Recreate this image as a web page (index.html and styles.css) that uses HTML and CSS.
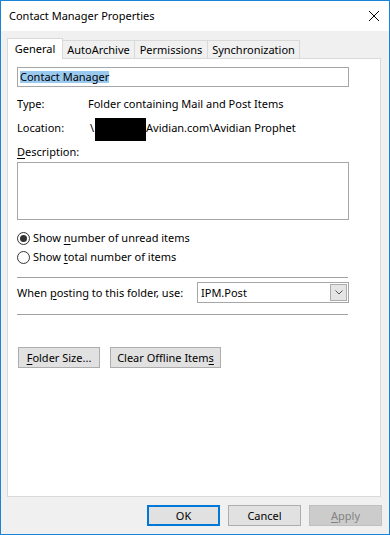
FILE: index.html
```html
<!DOCTYPE html>
<html>
<head>
<meta charset="utf-8">
<link rel="stylesheet" href="styles.css">
</head>
<body>
<div class="window">
  <div class="titlebar">
    <span class="title">Contact Manager Properties</span>
    <svg class="close" width="10" height="10" viewBox="0 0 10 10"><path d="M0 0L10 10M10 0L0 10" stroke="#000" stroke-width="1" fill="none"/></svg>
  </div>
  <div class="client">
    <div class="tabs">
      <div class="tab sel">General</div>
      <div class="tab t-aa">AutoArchive</div>
      <div class="tab t-pe">Permissions</div>
      <div class="tab t-sy">Synchronization</div>
    </div>
    <div class="panel">
      <div class="namebox"><span class="seltext">Contact Manager</span></div>
      <div class="info-row"><span class="lbl">Type:</span><span class="val">Folder containing Mail and Post Items</span></div>
      <div class="info-row loc"><span class="lbl">Location:</span><span class="val loc-val"><span class="txt">\</span><span class="redact"></span><span class="txt">Avidian.com\Avidian Prophet</span></span></div>
      <div class="desc"><u>D</u>escription:</div>
      <div class="textarea"></div>
      <div class="radio-row first"><span class="radio on"></span><span>Show <u>n</u>umber of unread items</span></div>
      <div class="radio-row"><span class="radio"></span><span>Show <u>t</u>otal number of items</span></div>
      <div class="sep"></div>
      <div class="post-row">
        <span class="post-lbl">When <u>p</u>osting to this folder, use:</span>
        <div class="combo">
          <span class="combo-text">IPM.Post</span>
          <span class="drop"><svg width="8" height="5" viewBox="0 0 8 5"><path d="M0.5 0.5L4 4L7.5 0.5" stroke="#555" stroke-width="1" fill="none"/></svg></span>
        </div>
      </div>
      <div class="sep sep2"></div>
      <div class="btn-row">
        <div class="btn w-folder"><span><u>F</u>older Size...</span></div>
        <div class="btn w-clear"><span>Clear Offline Item<u>s</u></span></div>
      </div>
    </div>
    <div class="footer">
      <div class="btn fbtn default">OK</div>
      <div class="btn fbtn">Cancel</div>
      <div class="btn fbtn disabled"><span><u>A</u>pply</span></div>
    </div>
  </div>
</div>
</body>
</html>
```

FILE: styles.css
```css
html, body {
  margin: 0;
  padding: 0;
}
body {
  width: 390px;
  height: 535px;
  font-family: "Noto Sans", "Open Sans", sans-serif;
  font-size: 11px;
  line-height: 16px;
  color: #000;
  overflow: hidden;
}
u {
  text-decoration: underline;
  text-underline-offset: 2px;
}
.window {
  box-sizing: border-box;
  width: 390px;
  height: 535px;
  border: 1px solid #1883d7;
  display: flex;
  flex-direction: column;
  background: #f0f0f0;
}
.titlebar {
  height: 30px;
  flex: none;
  background: #fff;
  display: flex;
  align-items: center;
  justify-content: space-between;
  padding: 0 10px 0 8px;
}
.close {
  display: block;
}
.client {
  flex: 1;
  padding: 7px 8px 0 6px;
  display: flex;
  flex-direction: column;
}
.tabs {
  display: flex;
  align-items: flex-end;
  height: 21px;
  margin-bottom: -1px;
  flex: none;
}
.tab {
  box-sizing: border-box;
  height: 18px;
  margin-bottom: 1px;
  border-top: 1px solid #d9d9d9;
  border-right: 1px solid #d9d9d9;
  background: #f0f0f0;
  text-align: center;
  padding-top: 1px;
}
.tab.sel {
  width: 56px;
  height: 21px;
  margin-bottom: 0;
  border: 1px solid #d9d9d9;
  border-bottom: none;
  background: #fff;
  padding-top: 2px;
  position: relative;
  z-index: 1;
}
.t-aa { width: 72px; }
.t-pe { width: 73px; }
.t-sy { width: 92px; }
.panel {
  box-sizing: border-box;
  height: 439px;
  flex: none;
  border: 1px solid #d9d9d9;
  background: #fff;
  padding-left: 9px;
  display: flex;
  flex-direction: column;
}
.namebox {
  box-sizing: border-box;
  margin-top: 8px;
  width: 332px;
  height: 20px;
  border: 1px solid #a6a6a6;
  padding-left: 2px;
  display: flex;
  align-items: center;
}
.seltext {
  display: inline-block;
  height: 12px;
  line-height: 12px;
  background: #99c9ef;
}
.info-row {
  display: flex;
  margin-top: 9px;
}
.lbl {
  width: 71px;
  flex: none;
}
.loc {
  margin-top: 6px;
  align-items: flex-start;
}
.loc .lbl {
  margin-top: 2px;
}
.loc-val {
  display: flex;
  align-items: flex-start;
}
.loc-val .txt {
  margin-top: 2px;
}
.loc-val .txt:first-child {
  margin-left: 2px;
}
.redact {
  width: 51px;
  height: 23px;
  background: #000;
  margin-left: 1px;
}
.desc {
  margin-top: 3px;
}
.textarea {
  box-sizing: border-box;
  margin-top: 2px;
  width: 332px;
  height: 58px;
  border: 1px solid #a6a6a6;
}
.radio-row {
  display: flex;
  align-items: center;
  height: 16px;
  margin-top: 3px;
}
.radio-row.first {
  margin-top: 10px;
}
.radio {
  box-sizing: border-box;
  width: 13px;
  height: 13px;
  border: 1px solid #333;
  border-radius: 50%;
  background: #fff;
  margin-right: 3px;
  display: flex;
  align-items: center;
  justify-content: center;
  flex: none;
}
.radio.on::after {
  content: "";
  width: 7px;
  height: 7px;
  border-radius: 50%;
  background: #333;
}
.sep {
  margin-top: 12px;
  width: 331px;
  height: 1px;
  background: #a0a0a0;
}
.sep2 {
  margin-top: 11px;
}
.post-row {
  margin-top: 4px;
  display: flex;
  align-items: center;
  height: 21px;
}
.post-lbl {
  width: 180px;
  flex: none;
}
.combo {
  box-sizing: border-box;
  width: 152px;
  height: 21px;
  border: 1px solid #a6a6a6;
  background: #fff;
  display: flex;
  align-items: center;
  justify-content: space-between;
  padding-left: 3px;
}
.drop {
  box-sizing: border-box;
  width: 17px;
  height: 17px;
  margin-right: 1px;
  border: 1px solid #acacac;
  background: #e5e5e5;
  display: flex;
  align-items: center;
  justify-content: center;
}
.drop svg {
  display: block;
}
.btn-row {
  margin-top: 32px;
  display: flex;
  gap: 10px;
  padding-left: 1px;
}
.btn {
  box-sizing: border-box;
  height: 21px;
  border: 1px solid #adadad;
  background: #e1e1e1;
  display: flex;
  align-items: center;
  justify-content: center;
}
.w-folder { width: 82px; }
.w-clear { width: 111px; }
.footer {
  margin-top: 8px;
  margin-right: -1px;
  display: flex;
  justify-content: flex-end;
  gap: 8px;
}
.fbtn {
  width: 73px;
}
.fbtn.default {
  border: 2px solid #0078d7;
}
.fbtn.disabled {
  background: #cccccc;
  border-color: #bfbfbf;
  color: #838383;
}
```
